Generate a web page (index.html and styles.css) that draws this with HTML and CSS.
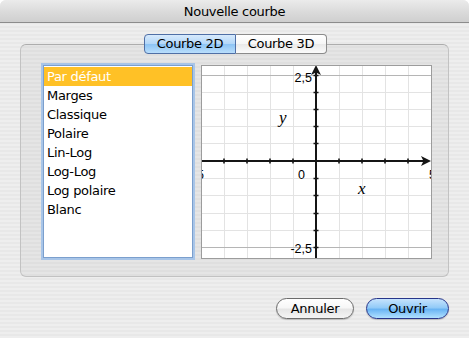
FILE: index.html
```html
<!DOCTYPE html>
<html lang="fr">
<head>
    <meta charset="UTF-8">
    <title>Nouvelle courbe</title>
    <link rel="stylesheet" href="styles.css">
</head>
<body>

    <div class="window">
        <div class="titlebar">Nouvelle courbe</div>

        <div class="content">
            <!-- Tabs -->
            <div class="tabs">
                <span class="tab active">Courbe 2D</span>
                <span class="tab">Courbe 3D</span>
            </div>

            <!-- Group box -->
            <div class="group">
                <ul class="list">
                    <li class="selected">Par défaut</li>
                    <li>Marges</li>
                    <li>Classique</li>
                    <li>Polaire</li>
                    <li>Lin-Log</li>
                    <li>Log-Log</li>
                    <li>Log polaire</li>
                    <li>Blanc</li>
                </ul>

                <div class="graph">
                    <svg width="229" height="192" viewBox="0 0 229 192">
                        <g stroke="#e3e3e3" stroke-width="1">
                            <line x1="22.5" y1="0" x2="22.5" y2="192"/>
                            <line x1="45.5" y1="0" x2="45.5" y2="192"/>
                            <line x1="68.5" y1="0" x2="68.5" y2="192"/>
                            <line x1="91.5" y1="0" x2="91.5" y2="192"/>
                            <line x1="137.5" y1="0" x2="137.5" y2="192"/>
                            <line x1="160.5" y1="0" x2="160.5" y2="192"/>
                            <line x1="183.5" y1="0" x2="183.5" y2="192"/>
                            <line x1="206.5" y1="0" x2="206.5" y2="192"/>
                            <line x1="0" y1="26.5" x2="229" y2="26.5"/>
                            <line x1="0" y1="43.5" x2="229" y2="43.5"/>
                            <line x1="0" y1="60.5" x2="229" y2="60.5"/>
                            <line x1="0" y1="77.5" x2="229" y2="77.5"/>
                            <line x1="0" y1="112.5" x2="229" y2="112.5"/>
                            <line x1="0" y1="129.5" x2="229" y2="129.5"/>
                            <line x1="0" y1="147.5" x2="229" y2="147.5"/>
                            <line x1="0" y1="164.5" x2="229" y2="164.5"/>
                        </g>
                        <g stroke="#b5b5b5" stroke-width="1">
                            <line x1="0" y1="9.5" x2="229" y2="9.5"/>
                            <line x1="0" y1="181.5" x2="229" y2="181.5"/>
                        </g>

                        <!-- axes -->
                        <g stroke="#151515">
                            <line x1="0" y1="95" x2="222" y2="95" stroke-width="2"/>
                            <line x1="114" y1="6" x2="114" y2="192" stroke-width="2"/>
                        </g>
                        <g fill="#151515">
                            <polygon points="229,95 219,90 221.5,95 219,100"/>
                            <polygon points="114,-1 109,9 114,6.5 119,9"/>
                        </g>

                        <!-- ticks -->
                        <g stroke="#151515" stroke-width="1.6">
                            <line x1="22" y1="92.5" x2="22" y2="97.5"/>
                            <line x1="45" y1="92.5" x2="45" y2="97.5"/>
                            <line x1="68" y1="92.5" x2="68" y2="97.5"/>
                            <line x1="91" y1="92.5" x2="91" y2="97.5"/>
                            <line x1="137" y1="92.5" x2="137" y2="97.5"/>
                            <line x1="160" y1="92.5" x2="160" y2="97.5"/>
                            <line x1="183" y1="92.5" x2="183" y2="97.5"/>
                            <line x1="206" y1="92.5" x2="206" y2="97.5"/>
                            <line x1="111.5" y1="9.5" x2="116.5" y2="9.5"/>
                            <line x1="111.5" y1="26.5" x2="116.5" y2="26.5"/>
                            <line x1="111.5" y1="43.5" x2="116.5" y2="43.5"/>
                            <line x1="111.5" y1="60.5" x2="116.5" y2="60.5"/>
                            <line x1="111.5" y1="77.5" x2="116.5" y2="77.5"/>
                            <line x1="111.5" y1="112.5" x2="116.5" y2="112.5"/>
                            <line x1="111.5" y1="129.5" x2="116.5" y2="129.5"/>
                            <line x1="111.5" y1="147.5" x2="116.5" y2="147.5"/>
                            <line x1="111.5" y1="164.5" x2="116.5" y2="164.5"/>
                            <line x1="111.5" y1="181.5" x2="116.5" y2="181.5"/>
                        </g>

                        <!-- labels -->
                        <g class="num">
                            <text x="110" y="16" text-anchor="end">2,5</text>
                            <text x="110" y="187" text-anchor="end">-2,5</text>
                            <text x="96" y="113">0</text>
                            <text x="-5" y="113">5</text>
                            <text x="227" y="113">5</text>
                        </g>
                        <g class="var">
                            <text x="77" y="57">y</text>
                            <text x="156" y="128">x</text>
                        </g>
                    </svg>
                </div>
            </div>

            <!-- Buttons -->
            <div class="buttons">
                <button class="btn">Annuler</button>
                <button class="btn default">Ouvrir</button>
            </div>
        </div>
    </div>

</body>
</html>
```

FILE: styles.css
```css
html {
    background: #ffffff;
}
body {
    margin: 0;
    width: 469px;
    height: 338px;
    overflow: hidden;
    font-family: "DejaVu Sans", sans-serif;
    font-size: 13px;
    letter-spacing: -0.3px;
    color: #000;
}
.window {
    height: 338px;
    border-radius: 6px 6px 0 0;
    overflow: hidden;
    background: repeating-linear-gradient(to bottom, #eeeeee 0, #eeeeee 2px, #e8e8e8 2px, #e8e8e8 4px);
}
.titlebar {
    height: 22px;
    line-height: 23px;
    text-align: center;
    background: linear-gradient(#ebebeb, #d9d9d9 60%, #cfcfcf);
    border-bottom: 1px solid #8c8c8c;
}
.content {
    padding: 11px 20px 0 20px;
}
.tabs {
    display: flex;
    justify-content: center;
    position: relative;
    z-index: 1;
    margin-left: 2px;
}
.tab {
    box-sizing: border-box;
    height: 20px;
    line-height: 18px;
    width: 91px;
    text-align: center;
    border: 1px solid #8b8b8b;
    background: linear-gradient(#ffffff, #f6f6f6 50%, #e9e9e9 51%, #fbfbfb);
}
.tab:first-child {
    width: 92px;
    border-radius: 4px 0 0 4px;
}
.tab:last-child {
    border-left: none;
    border-radius: 0 4px 4px 0;
}
.tab.active {
    border-color: #4f6fa6;
    background: linear-gradient(#d7eafc, #b2d6f8 50%, #8cc3f4 51%, #b9defc);
}
.group {
    box-sizing: border-box;
    height: 233px;
    margin-top: -10px;
    padding: 20px 16px 18px 22px;
    display: flex;
    gap: 8px;
    border: 1px solid #c2c2c2;
    border-top-color: #adadad;
    border-radius: 6px;
    background: rgba(0, 0, 0, 0.035);
}
.list {
    box-sizing: border-box;
    width: 150px;
    height: 193px;
    margin: 0;
    padding: 1px 0 0 0;
    list-style: none;
    background: #ffffff;
    border: 1px solid #7b9fcd;
    box-shadow: 0 0 0 2px #a8c5e8;
}
.list li {
    height: 19px;
    line-height: 19px;
    padding-left: 3px;
}
.list li.selected {
    background: #ffc126;
    color: #ffffff;
}
.graph {
    width: 229px;
    height: 192px;
    border: 1px solid #9c9c9c;
    background: #ffffff;
    overflow: hidden;
}
.graph svg {
    display: block;
    overflow: hidden;
}
.num {
    font-family: "Liberation Sans", sans-serif;
    font-size: 12.5px;
    letter-spacing: 0;
    fill: #000;
}
.var {
    font-family: "Liberation Serif", serif;
    font-style: italic;
    font-size: 17px;
    letter-spacing: 0;
    fill: #000;
}
.buttons {
    display: flex;
    justify-content: flex-end;
    gap: 12px;
    margin-top: 21px;
}
.btn {
    box-sizing: border-box;
    width: 78px;
    height: 21px;
    padding: 0;
    font-family: "DejaVu Sans", sans-serif;
    font-size: 13px;
    letter-spacing: -0.3px;
    color: #000;
    border: 1px solid #6c6c6c;
    border-radius: 11px;
    background: linear-gradient(#ffffff, #f7f7f7 45%, #e6e6e6 55%, #f4f4f4);
    box-shadow: 0 1px 1px rgba(0, 0, 0, 0.2);
}
.btn.default {
    width: 83px;
    border-color: #27358a;
    background: linear-gradient(#c6e3fd, #93cbf8 45%, #6ab4f3 55%, #b1e1ff);
}
```
